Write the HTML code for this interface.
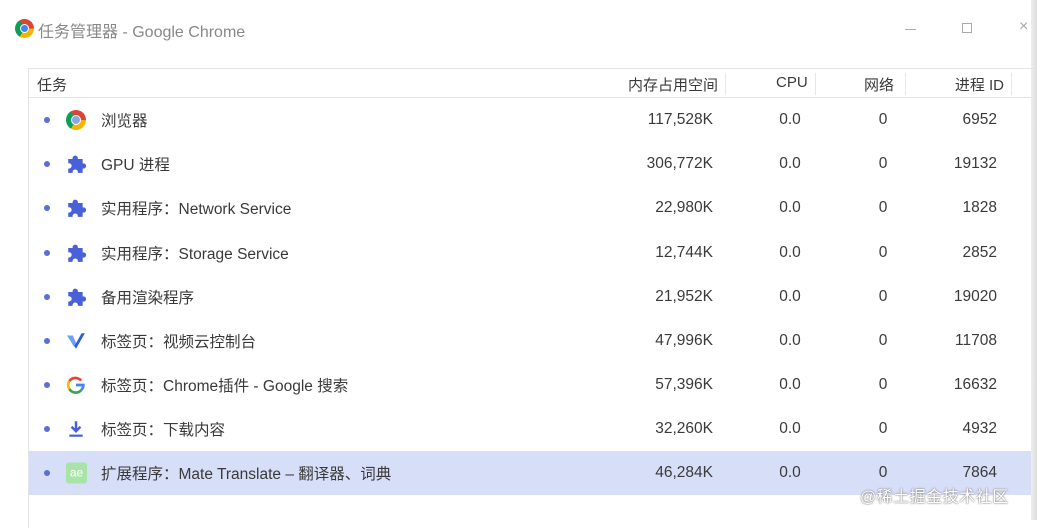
<!DOCTYPE html>
<html><head><meta charset="utf-8"><style>
*{margin:0;padding:0;box-sizing:border-box}
body{width:1037px;height:520px;overflow:hidden;background:#fff;font-family:"Liberation Sans","Noto Sans CJK SC",sans-serif;color:#3a3a3a;position:relative}
.abs{position:absolute}
.title{left:38px;top:18px;font-size:16px;color:#888}
.strip{left:1031px;top:0;width:6px;height:520px;background:linear-gradient(90deg,#eee,#ddd)}
.box{left:28px;top:68px;width:1010px;height:460px;border-left:1px solid #e4e4e4;border-top:1px solid #e4e4e4}
.hdr{left:29px;top:69px;width:1002px;height:29px;border-bottom:1px solid #e4e4e4;font-size:15px;color:#3a3a3a}
.sep{position:absolute;top:4px;width:1px;height:22px;background:#e8e8e8}
.row{position:absolute;left:29px;width:1002px;height:44px;font-size:15.5px;color:#3a3a3a}
.row span{position:absolute;top:50%;transform:translateY(-50%)}
.dot{left:15px;width:6px;height:6px;border-radius:50%;background:#5b6fd6}
.ic{left:37px;width:20px;height:20px}
.name{left:72px;white-space:nowrap}
.mem{right:318px}
.cpu{left:761px;width:0}
.cpu,.net{display:flex;justify-content:center}
.net{left:854px;width:0}
.pid{right:34px}
.sel{background:#d7def7}
.wm{left:860px;top:483px;font-size:16px;color:#fff;text-shadow:0 0 2px #888,0 0 1px #666;letter-spacing:0.5px}
</style></head><body>
<div class="abs" style="left:15px;top:19px;width:19px;height:19px;border-radius:50%;background:conic-gradient(from -30deg,#db4437 0 120deg,#f4b400 120deg 240deg,#0f9d58 240deg 360deg)"><div style="position:absolute;left:5px;top:5px;width:9px;height:9px;border-radius:50%;background:#4285f4;border:1.5px solid #fff"></div></div>
<div class="abs title">任务管理器 - Google Chrome</div>
<div class="abs" style="left:905px;top:29px;width:11px;height:1px;background:#aaa"></div>
<div class="abs" style="left:962px;top:23px;width:10px;height:10px;border:1px solid #aaa"></div>
<div class="abs" style="left:1019px;top:18px;font-size:16px;color:#aaa">×</div>
<div class="abs strip"></div>
<div class="abs box"></div>
<div class="abs hdr">
<span class="abs" style="left:8px;top:5px">任务</span>
<span class="abs" style="right:313px;top:5px">内存占用空间</span><div class="sep" style="left:696px"></div>
<span class="abs" style="left:747px;top:5px">CPU</span><div class="sep" style="left:786px"></div>
<span class="abs" style="left:835px;top:5px">网络</span><div class="sep" style="left:876px"></div>
<span class="abs" style="right:27px;top:5px">进程 ID</span><div class="sep" style="left:982px"></div>
</div>

<div class="row" style="top:98px"><span class="dot"></span><span class="ic" style="border-radius:50%;background:conic-gradient(from -30deg,#db4437 0 120deg,#f4b400 120deg 240deg,#0f9d58 240deg 360deg)"><i style="position:absolute;left:5px;top:5px;width:10px;height:10px;border-radius:50%;background:#8aa8e8;border:1.5px solid #fff"></i></span><span class="name">浏览器</span><span class="mem">117,528K</span><span class="cpu">0.0</span><span class="net">0</span><span class="pid">6952</span></div>

<div class="row" style="top:142px"><span class="dot"></span><svg class="abs ic" style="top:12px" viewBox="0 0 18 18"><path d="M2 4.5h4a2.4 2.4 0 1 1 4.6 0H15v4a2.4 2.4 0 1 1 0 4.6V17h-4.4a2.4 2.4 0 1 0-4.6 0H2v-4a2.4 2.4 0 1 0 0-4.6z" fill="#4a60d8"/></svg><span class="name">GPU 进程</span><span class="mem">306,772K</span><span class="cpu">0.0</span><span class="net">0</span><span class="pid">19132</span></div>

<div class="row" style="top:186px"><span class="dot"></span><svg class="abs ic" style="top:12px" viewBox="0 0 18 18"><path d="M2 4.5h4a2.4 2.4 0 1 1 4.6 0H15v4a2.4 2.4 0 1 1 0 4.6V17h-4.4a2.4 2.4 0 1 0-4.6 0H2v-4a2.4 2.4 0 1 0 0-4.6z" fill="#4a60d8"/></svg><span class="name">实用程序：Network Service</span><span class="mem">22,980K</span><span class="cpu">0.0</span><span class="net">0</span><span class="pid">1828</span></div>

<div class="row" style="top:231px"><span class="dot"></span><svg class="abs ic" style="top:12px" viewBox="0 0 18 18"><path d="M2 4.5h4a2.4 2.4 0 1 1 4.6 0H15v4a2.4 2.4 0 1 1 0 4.6V17h-4.4a2.4 2.4 0 1 0-4.6 0H2v-4a2.4 2.4 0 1 0 0-4.6z" fill="#4a60d8"/></svg><span class="name">实用程序：Storage Service</span><span class="mem">12,744K</span><span class="cpu">0.0</span><span class="net">0</span><span class="pid">2852</span></div>

<div class="row" style="top:275px"><span class="dot"></span><svg class="abs ic" style="top:12px" viewBox="0 0 18 18"><path d="M2 4.5h4a2.4 2.4 0 1 1 4.6 0H15v4a2.4 2.4 0 1 1 0 4.6V17h-4.4a2.4 2.4 0 1 0-4.6 0H2v-4a2.4 2.4 0 1 0 0-4.6z" fill="#4a60d8"/></svg><span class="name">备用渲染程序</span><span class="mem">21,952K</span><span class="cpu">0.0</span><span class="net">0</span><span class="pid">19020</span></div>

<div class="row" style="top:319px"><span class="dot"></span><svg class="abs ic" style="top:12px" viewBox="0 0 18 18"><path d="M1 4l5 0 3 7 5-9h3l-8 14z" fill="#2f5be0"/><path d="M1 4h5l3 7-2 3z" fill="#6fa0f5"/></svg><span class="name">标签页：视频云控制台</span><span class="mem">47,996K</span><span class="cpu">0.0</span><span class="net">0</span><span class="pid">11708</span></div>

<div class="row" style="top:363px"><span class="dot"></span><svg class="abs ic" style="top:12px" viewBox="0 0 18 18"><path d="M13.6 5.1A6.6 6.6 0 0 0 3 5.5" stroke="#ea4335" stroke-width="2.4" fill="none"/><path d="M3 5.5a6.6 6.6 0 0 0 0 7" stroke="#fbbc05" stroke-width="2.4" fill="none"/><path d="M3 12.5a6.6 6.6 0 0 0 10.8 1" stroke="#34a853" stroke-width="2.4" fill="none"/><path d="M13.8 13.5A6.6 6.6 0 0 0 15.6 9H9" stroke="#4285f4" stroke-width="2.4" fill="none"/></svg><span class="name">标签页：Chrome插件 - Google 搜索</span><span class="mem">57,396K</span><span class="cpu">0.0</span><span class="net">0</span><span class="pid">16632</span></div>

<div class="row" style="top:407px"><span class="dot"></span><svg class="abs ic" style="top:12px" viewBox="0 0 18 18"><path d="M9 2v8M5 7l4 4 4-4" stroke="#4a60d8" stroke-width="2.2" fill="none"/><path d="M3 15h12" stroke="#4a60d8" stroke-width="2"/></svg><span class="name">标签页：下载内容</span><span class="mem">32,260K</span><span class="cpu">0.0</span><span class="net">0</span><span class="pid">4932</span></div>

<div class="row sel" style="top:451px"><span class="dot"></span><span class="ic" style="border-radius:3px;background:#a8e3a8;color:#fff;font-size:12px;text-align:center;line-height:20px;width:21px;height:21px">ae</span><span class="name">扩展程序：Mate Translate – 翻译器、词典</span><span class="mem">46,284K</span><span class="cpu">0.0</span><span class="net">0</span><span class="pid">7864</span></div>

<div class="abs wm">@稀土掘金技术社区</div>
</body></html>
